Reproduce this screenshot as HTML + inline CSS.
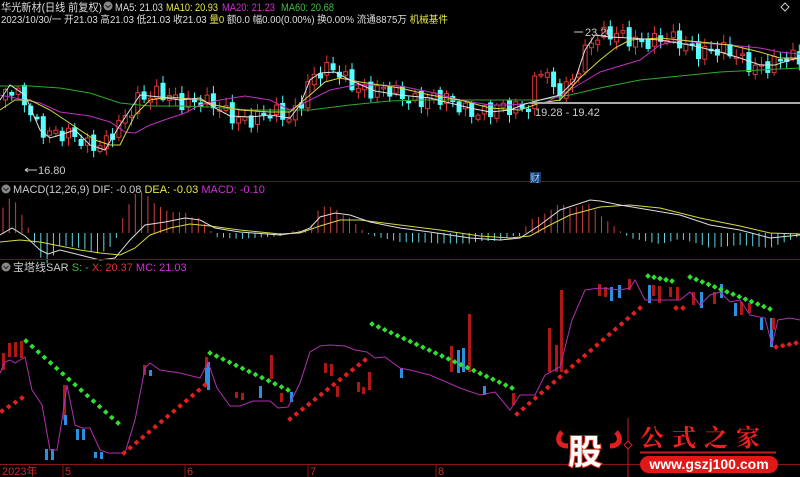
<!DOCTYPE html>
<html><head><meta charset="utf-8"><style>
html,body{margin:0;padding:0;background:#000;width:800px;height:477px;overflow:hidden}
svg{display:block}
text{font-family:"Liberation Sans","Noto Sans CJK SC",sans-serif;font-size:11px}
</style></head><body>
<svg id="s" width="800" height="477" viewBox="0 0 800 477" xmlns="http://www.w3.org/2000/svg">
<rect width="800" height="477" fill="#000"/>
<g id="g"></g>
<line x1="0" y1="181.5" x2="800" y2="181.5" stroke="#7a1010"/>
<line x1="0" y1="259.5" x2="800" y2="259.5" stroke="#7a1010"/>
<line x1="0" y1="464.5" x2="800" y2="464.5" stroke="#8a1515"/>
<line x1="530" y1="103" x2="800" y2="103" stroke="#aaa" stroke-width="2"/>
<text x="1" y="11" fill="#ddd" textLength="101" lengthAdjust="spacingAndGlyphs" style="font-size:11px">华光新材(日线 前复权)</text>
<circle cx="108" cy="6" r="4.5" fill="#888"/><path d="M105.5 5l2.5 2.5 2.5-2.5" stroke="#222" fill="none"/>
<text x="115" y="11" fill="#ddd" textLength="48" lengthAdjust="spacingAndGlyphs">MA5: 21.03</text>
<text x="166" y="11" fill="#e6e64a" textLength="52" lengthAdjust="spacingAndGlyphs">MA10: 20.93</text>
<text x="222" y="11" fill="#d030d0" textLength="53" lengthAdjust="spacingAndGlyphs">MA20: 21.23</text>
<text x="281" y="11" fill="#3cc03c" textLength="53" lengthAdjust="spacingAndGlyphs">MA60: 20.68</text>
<text x="1" y="23" fill="#ddd" textLength="447" lengthAdjust="spacingAndGlyphs" style="font-size:10px">2023/10/30/一 开21.03 高21.03 低21.03 收21.03 <tspan fill="#e6e64a">量0</tspan> 额0.0 幅0.00(0.00%) 换0.00% 流通8875万 <tspan fill="#e6e64a">机械基件</tspan></text>
<path d="M781 7l4-4 4 4-4 4z" stroke="#ccc" fill="none"/>
<text x="38" y="174" fill="#ccc">16.80</text><path d="M25 170h12M25 170l3-2M25 170l3 2" stroke="#ccc"/>
<text x="585" y="36" fill="#ccc">23.20</text><path d="M574 32h9" stroke="#ccc"/>
<text x="535" y="116" fill="#ccc">19.28 - 19.42</text>
<rect x="530" y="172" width="11" height="11" fill="#1a3a6a"/><text x="530" y="182" fill="#9cf" style="font-size:10px">财</text>
<circle cx="6" cy="189" r="4.5" fill="#888"/><path d="M3.5 188l2.5 2.5 2.5-2.5" stroke="#222" fill="none"/>
<text x="13" y="193" fill="#ccc">MACD(12,26,9) DIF: -0.08 <tspan fill="#e6e64a">DEA: -0.03</tspan> <tspan fill="#d030d0">MACD: -0.10</tspan></text>
<circle cx="6" cy="267" r="4.5" fill="#888"/><path d="M3.5 266l2.5 2.5 2.5-2.5" stroke="#222" fill="none"/>
<text x="13" y="271" fill="#ccc">宝塔线SAR <tspan fill="#3cc03c">S: -</tspan> <tspan fill="#e03030">X: 20.37</tspan> <tspan fill="#d030d0">MC: 21.03</tspan></text>
<text x="2" y="475" fill="#c03030">2023年</text>
<g stroke="#8a1515"><line x1="63" y1="465" x2="63" y2="477"/><line x1="185" y1="465" x2="185" y2="477"/><line x1="308" y1="465" x2="308" y2="477"/><line x1="436" y1="465" x2="436" y2="477"/></g>
<text x="65" y="475" fill="#c03030">5</text><text x="187" y="475" fill="#c03030">6</text><text x="310" y="475" fill="#c03030">7</text><text x="438" y="475" fill="#c03030">8</text>
<g>
<path d="M562 432c-6 6-4 14 6 14" stroke="#e02020" stroke-width="5" fill="none"/>
<path d="M616 432c6 6 4 14-6 14" stroke="#e02020" stroke-width="5" fill="none"/>
<text x="568" y="464" fill="#fff" stroke="#e03020" stroke-width="2" paint-order="stroke" style="font-size:34px;font-weight:bold;font-family:'Noto Sans CJK SC',sans-serif">股</text>
<line x1="628" y1="418" x2="628" y2="477" stroke="#c02020"/>
<path d="M628 441l4 4-4 4-4-4z" stroke="#e02020" fill="#000"/>
<text x="640" y="446" fill="#f02020" style="font-size:24px;letter-spacing:8px;font-family:'Noto Serif CJK SC',serif;font-weight:bold">公式之家</text>
<line x1="640" y1="452.5" x2="776" y2="452.5" stroke="#c02020" stroke-width="2"/>
<rect x="640" y="456" width="138" height="17" rx="8.5" fill="#e01818"/>
<text x="709" y="469" fill="#fff" text-anchor="middle" style="font-size:14px;font-weight:bold">www.gszj100.com</text>
</g>
</svg>
<script>
(function(){
var NS="http://www.w3.org/2000/svg",G=document.getElementById("g");
function el(t,a){var e=document.createElementNS(NS,t);for(var k in a)e.setAttribute(k,a[k]);G.appendChild(e);return e}
function interp(p,x){for(var j=0;j<p.length-1;j++){if(x<=p[j+1][0]){var t=(x-p[j][0])/(p[j+1][0]-p[j][0]);return p[j][1]+t*(p[j+1][1]-p[j][1])}}return p[p.length-1][1]}
function poly(p,c,w){el("polyline",{points:p.map(function(q){return q.join(",")}).join(" "),stroke:c,fill:"none","stroke-width":w||1})}
var m5=[[0,100],[10,85],[25,95],[40,130],[50,138],[60,135],[75,130],[90,145],[105,150],[120,125],[140,95],[160,97],[180,100],[200,98],[215,108],[230,116],[250,117],[270,115],[290,118],[300,105],[310,80],[320,73],[335,72],[350,80],[375,91],[400,95],[430,98],[450,103],[470,108],[490,112],[510,110],[525,104],[540,100],[560,95],[575,80],[585,50],[595,35],[610,37],[630,38],[660,40],[690,45],[720,52],[740,58],[760,65],[775,65],[790,60],[800,58]];
var m10=[[0,110],[15,100],[30,100],[50,110],[65,120],[80,130],[95,140],[110,145],[120,145],[135,115],[150,100],[170,97],[200,100],[215,105],[240,110],[270,112],[290,112],[310,95],[325,82],[340,78],[360,82],[400,88],[430,95],[460,100],[490,108],[520,110],[540,103],[560,100],[580,78],[600,60],[615,48],[630,40],[660,38],[700,42],[730,45],[760,52],[780,58],[800,58]];
var m20=[[0,95],[15,98],[40,103],[60,112],[90,116],[110,122],[125,132],[135,133],[150,125],[170,118],[185,113],[200,105],[220,100],[245,96],[270,100],[290,110],[310,100],[330,90],[355,85],[380,85],[400,86],[430,92],[460,100],[490,105],[510,105],[530,103],[545,103],[570,90],[600,72],[640,60],[660,45],[680,40],[700,43],[730,45],[760,48],[780,52],[800,54]];
var m60=[[0,86],[30,86],[60,88],[90,93],[120,103],[150,106],[180,106],[210,107],[250,110],[280,110],[310,110],[350,105],[390,101],[420,100],[450,100],[500,100],[540,100],[570,95],[600,88],[640,80],[680,76],[720,72],[760,70],[800,68]];
var prev=interp(m5,0);
for(var x=3,i=0;x<798;x+=6.3,i++){
 var base=interp(m5,x+4);var n=Math.sin(i*2.3)*9+Math.sin(i*0.7)*5;
 var c=base+n*0.8, o=prev+Math.sin(i*1.7)*3;
 if(x>528&&x<545){c=base-25;}
 var up=c<o, yt=Math.min(o,c), yb=Math.max(o,c); if(yb-yt<1.5)yb=yt+1.5;
 var col=up?"#e03838":"#54ffff";
 el("line",{x1:x+2.5,y1:yt-2-Math.abs(Math.sin(i*3.1))*6,x2:x+2.5,y2:yb+2+Math.abs(Math.cos(i*2.2))*6,stroke:col});
 el("rect",{x:x+0.5,y:yt,width:4,height:yb-yt,fill:up?"#000":col,stroke:col,"stroke-width":1});
 prev=c;
}
poly(m60,"#2faa2f");poly(m20,"#c030c0");poly(m10,"#d8d840");poly(m5,"#e0e0e0");
var dif=[[0,235],[12,228],[25,236],[40,250],[48,254],[60,250],[80,255],[100,260],[115,258],[130,240],[145,225],[165,222],[185,218],[200,220],[215,228],[240,232],[280,235],[300,232],[310,228],[320,217],[335,213],[350,215],[370,222],[400,228],[430,232],[470,238],[500,240],[520,238],[540,225],[560,210],[575,205],[590,200],[600,201],[620,205],[650,210],[680,215],[710,225],[740,230],[770,238],[800,235]];
var dea=[[0,242],[20,240],[40,242],[60,246],[80,250],[100,253],[120,255],[135,248],[150,235],[170,228],[190,224],[210,226],[240,230],[280,234],[300,233],[320,226],[340,220],[360,220],[400,225],[440,230],[480,236],[510,238],[530,236],[550,225],[570,215],[600,207],[630,205],[660,208],[700,218],[740,226],[770,233],[800,234]];
for(var x2=3;x2<798;x2+=6.3){var h=(interp(dea,x2)-interp(dif,x2))*3;var z=233;
 if(Math.abs(h)<1)h=h<0?-2:2;
 el("line",{x1:x2,y1:z,x2:x2,y2:z-h,stroke:h>0?"#d04040":"#60d8e0"});}
poly(dea,"#d8d840");poly(dif,"#dddddd");
var mc=[[0,373],[5,362],[10,360],[15,363],[25,357],[32,390],[42,405],[50,450],[57,450],[62,420],[67,385],[75,425],[82,428],[90,428],[100,450],[108,453],[125,453],[135,420],[145,368],[150,363],[160,370],[180,373],[200,378],[208,362],[217,388],[230,406],[240,406],[253,401],[270,401],[278,408],[288,407],[300,383],[310,352],[320,346],[330,345],[345,346],[355,350],[367,352],[375,358],[385,357],[400,368],[410,370],[430,375],[460,388],[480,395],[495,392],[510,410],[520,395],[535,395],[545,375],[560,367],[572,320],[585,290],[600,288],[620,290],[630,288],[635,280],[645,300],[660,300],[680,300],[690,292],[700,305],[710,295],[720,292],[730,302],[740,300],[750,315],[765,318],[772,345],[778,320],[790,318],[800,320]];
var bars=[[2,353,370,1],[8,343,357,1],[14,342,357,1],[20,341,358,1],[45,449,460,0],[51,449,460,0],[63,385,420,1],[64,415,425,0],[76,429,440,0],[82,429,440,0],[94,452,458,0],[100,452,459,0],[143,365,375,1],[149,370,376,0],[205,360,385,0],[205,357,368,1],[207,362,390,0],[235,392,398,1],[241,393,400,1],[259,386,398,0],[270,355,379,1],[280,393,402,1],[290,392,402,0],[324,363,373,1],[330,364,376,1],[336,386,397,1],[357,382,392,1],[362,387,394,1],[368,372,390,1],[400,368,378,0],[450,346,372,1],[457,350,373,0],[462,348,372,0],[468,314,372,1],[483,386,395,0],[512,393,405,1],[548,328,372,1],[555,345,372,1],[560,290,372,1],[598,284,296,1],[604,287,297,1],[610,287,301,0],[618,285,298,0],[628,279,290,1],[648,285,303,0],[652,285,296,1],[658,286,303,1],[669,287,297,1],[676,287,300,1],[692,292,305,1],[700,292,308,0],[713,292,304,1],[720,284,298,0],[734,303,316,0],[740,302,315,1],[748,303,313,1],[760,318,330,0],[770,318,347,0],[772,318,330,1]];
bars.forEach(function(b){el("rect",{x:b[0],y:b[1],width:3,height:b[2]-b[1],fill:b[3]?"#b01818":"#2a90e0"})});
poly(mc,"#b030b0");
function dots(x0,y0,x1,y1,c){var n=Math.max(1,Math.round((x1-x0)/6.3));for(var k=0;k<=n;k++){var xx=x0+(x1-x0)*k/n,yy=y0+(y1-y0)*k/n;el("rect",{x:xx-2,y:yy-2,width:4,height:4,fill:c,transform:"rotate(45 "+xx+" "+yy+")"})}}
dots(26,341,118,423,"#30e030");dots(210,353,288,390,"#30e030");dots(372,324,512,388,"#30e030");dots(648,276,672,281,"#30e030");dots(690,277,770,309,"#30e030");
dots(2,411,22,398,"#e02020");dots(124,453,205,385,"#e02020");dots(290,419,365,360,"#e02020");dots(517,414,640,308,"#e02020");dots(676,308,683,308,"#e02020");dots(776,347,796,343,"#e02020");
})();
</script>
</body></html>
